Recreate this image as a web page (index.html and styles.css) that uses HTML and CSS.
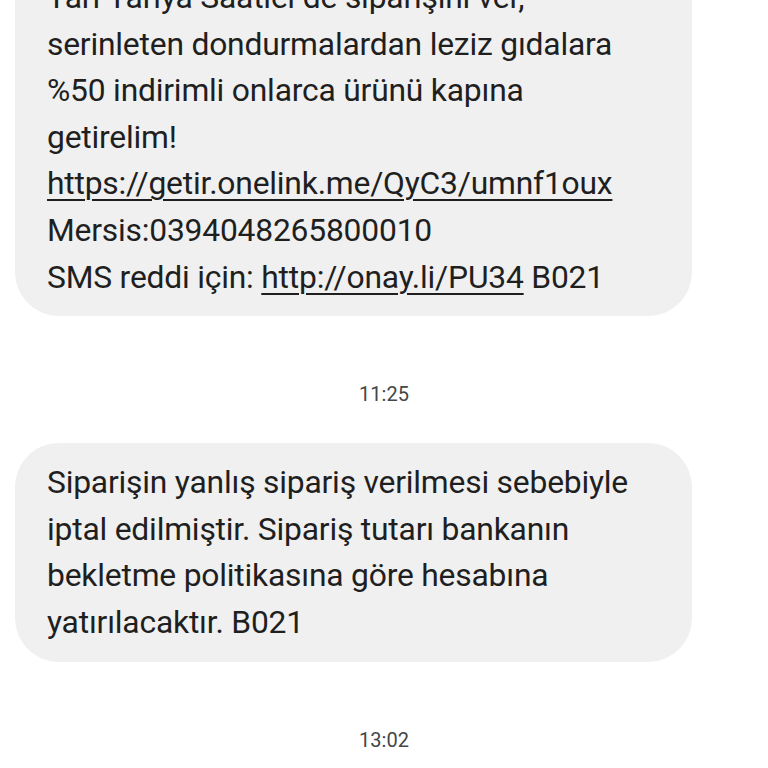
FILE: index.html
```html
<!DOCTYPE html>
<html lang="tr">
<head>
<meta charset="utf-8">
<link rel="stylesheet" href="styles.css">
</head>
<body>
<div class="thread">
  <div class="bubble">
    Yarı Yarıya Saatler'de siparişini ver,<br>
    serinleten dondurmalardan leziz gıdalara<br>
    %50 indirimli onlarca ürünü kapına<br>
    getirelim!<br>
    <a class="link">https://getir.onelink.me/QyC3/umnf1oux</a><br>
    Mersis:0394048265800010<br>
    SMS reddi için: <a class="link">http://onay.li/PU34</a> B021
  </div>
  <div class="time">11:25</div>
  <div class="bubble">
    Siparişin yanlış sipariş verilmesi sebebiyle<br>
    iptal edilmiştir. Sipariş tutarı bankanın<br>
    bekletme politikasına göre hesabına<br>
    yatırılacaktır. B021
  </div>
  <div class="time">13:02</div>
</div>
</body>
</html>
```
FILE: styles.css
```css
html, body {
  margin: 0;
  padding: 0;
  background: #ffffff;
}
body {
  width: 768px;
  height: 768px;
  overflow: hidden;
}
.thread {
  margin-top: -42px;
  display: flex;
  flex-direction: column;
}
.bubble {
  margin: 0 76px 0 15px;
  background: #f0f0f0;
  border-radius: 44px;
  padding: 16px 20px 16px 32px;
  font-family: Roboto, "Noto Sans", sans-serif;
  font-size: 31.8px;
  letter-spacing: -0.2px;
  line-height: 46.6px;
  color: #1f1f1f;
}
.link {
  color: #1f1f1f;
  text-decoration: underline;
  text-decoration-thickness: 2px;
  text-underline-offset: 5px;
}
.time {
  font-family: Roboto, "Noto Sans", sans-serif;
  font-size: 20px;
  line-height: 24px;
  color: #444746;
  text-align: center;
  margin: 66px 0 37px;
}
```
